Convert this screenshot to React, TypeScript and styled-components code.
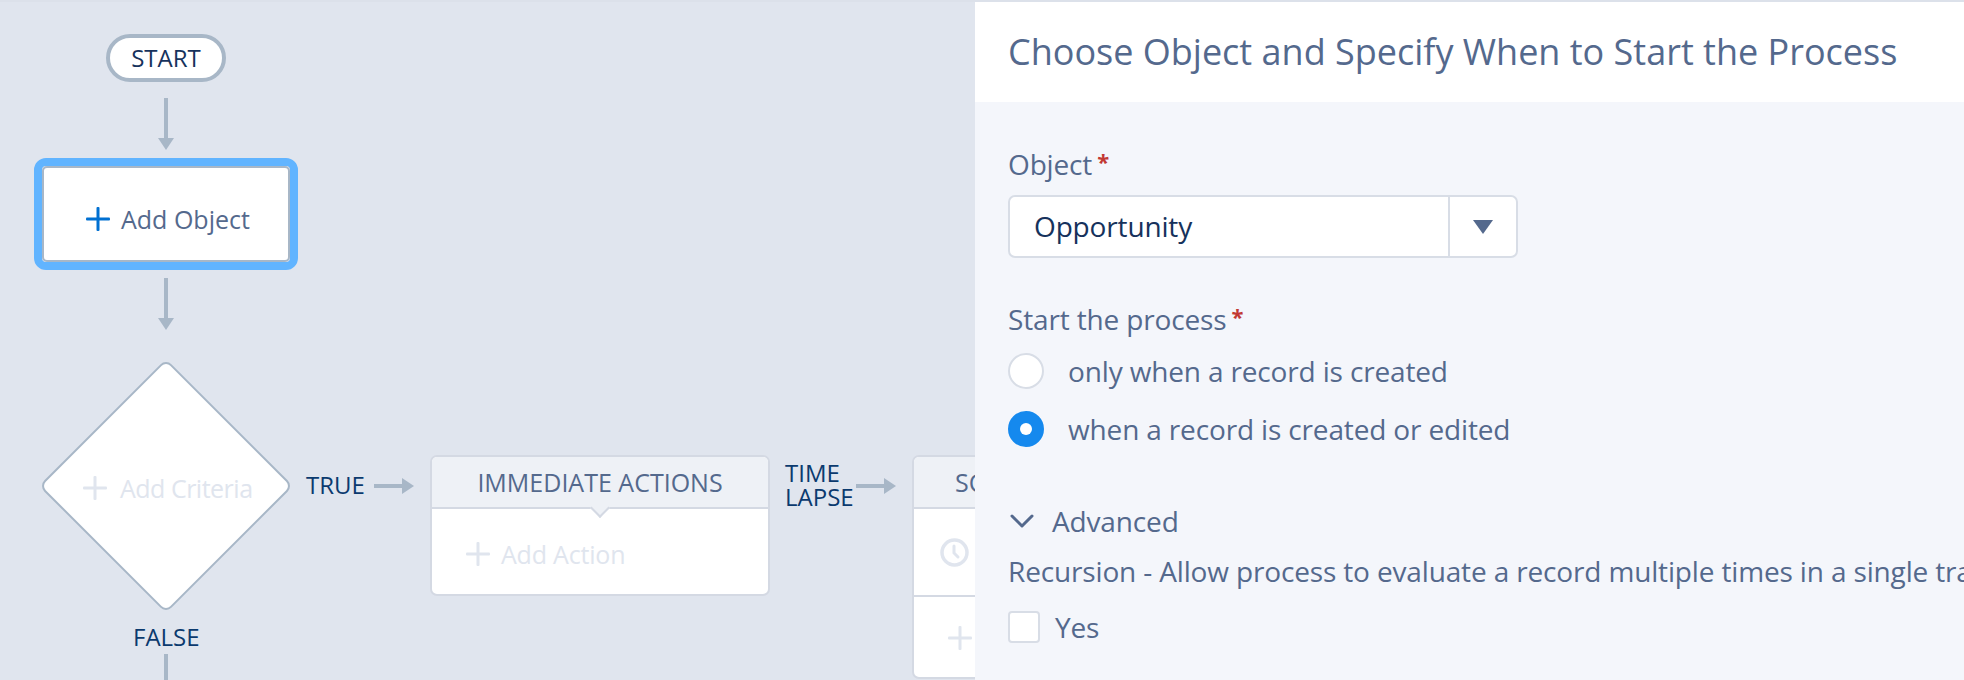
import React from "react";
import styled, { createGlobalStyle } from "styled-components";

const FONT = `"Open Sans", "Liberation Sans", sans-serif`;

const GlobalStyle = createGlobalStyle`
  html, body {
    margin: 0;
    padding: 0;
    background: #e0e5ee;
    font-family: ${FONT};
    overflow: hidden;
  }
`;

const Page = styled.div`
  display: flex;
  width: 1964px;
  height: 680px;
  overflow: hidden;
  border-top: 2px solid #dce1ea;
  box-sizing: border-box;
`;

/* ---- flow canvas: nodes sit at their diagram coordinates ---- */

const Canvas = styled.div`
  position: relative;
  width: 975px;
  height: 680px;
  margin-top: -2px;
  flex: none;
  overflow: hidden;
  background: #e0e5ee;
`;

const StartPill = styled.div`
  position: absolute;
  left: 106px;
  top: 34px;
  width: 120px;
  height: 48px;
  box-sizing: border-box;
  padding-bottom: 2px;
  display: flex;
  align-items: center;
  justify-content: center;
  background: #fff;
  border: 4px solid #a8b7c7;
  border-radius: 24px;
  color: #16325c;
  font-size: 24px;
`;

const Connector = styled.svg<{ $x: number; $y: number }>`
  position: absolute;
  left: ${(p) => p.$x}px;
  top: ${(p) => p.$y}px;
  display: block;
`;

const DownArrow = ({ y }: { y: number }) => (
  <Connector $x={158} $y={y} width="16" height="52" viewBox="0 0 16 52">
    <rect x="6" y="0" width="4" height="42" fill="#a8b7c7" />
    <path d="M0 40h16l-8 12z" fill="#a8b7c7" />
  </Connector>
);

const RightArrow = ({ x, y, w }: { x: number; y: number; w: number }) => (
  <Connector $x={x} $y={y} width={w} height="16" viewBox={`0 0 ${w} 16`}>
    <rect x="0" y="6" width={w - 10} height="4" fill="#a8b7c7" />
    <path d={`M${w - 12} 0v16l12-8z`} fill="#a8b7c7" />
  </Connector>
);

const PlusMark = styled.svg`
  flex: none;
  display: block;
`;

const Plus = ({ size, color, weight }: { size: number; color: string; weight: number }) => (
  <PlusMark width={size} height={size} viewBox={`0 0 ${size} ${size}`}>
    <rect x={(size - weight) / 2} y="0" width={weight} height={size} rx="1" fill={color} />
    <rect x="0" y={(size - weight) / 2} width={size} height={weight} rx="1" fill={color} />
  </PlusMark>
);

const ObjectHalo = styled.div`
  position: absolute;
  left: 34px;
  top: 158px;
  width: 264px;
  height: 112px;
  box-sizing: border-box;
  border: 8px solid #61b4ff;
  border-radius: 12px;
`;

const ObjectBox = styled.div`
  height: 100%;
  box-sizing: border-box;
  padding: 10px 0 0 42px;
  display: flex;
  align-items: center;
  gap: 11px;
  background: #fff;
  border: 2px solid #a8b7c7;
  border-radius: 5px;
  color: #54698d;
  font-size: 25px;
`;

const Diamond = styled.div`
  position: absolute;
  left: 76px;
  top: 396px;
  width: 180px;
  height: 180px;
  box-sizing: border-box;
  transform: rotate(45deg);
  background: #fff;
  border: 2px solid #a8b7c7;
  border-radius: 8px;
`;

const CriteriaLabel = styled.div`
  position: absolute;
  left: 83px;
  top: 471px;
  display: flex;
  align-items: center;
  gap: 13px;
  color: #e0e5ee;
  font-size: 25px;
  letter-spacing: -0.5px;
`;

const PathLabel = styled.div<{ $x: number; $y: number }>`
  position: absolute;
  left: ${(p) => p.$x}px;
  top: ${(p) => p.$y}px;
  color: #0b3a6e;
  font-size: 24px;
  line-height: 24px;
`;

const FalseLine = styled.div`
  position: absolute;
  left: 164px;
  top: 654px;
  width: 4px;
  height: 26px;
  background: #a8b7c7;
`;

const ActionCard = styled.div<{ $x: number; $h: number }>`
  position: absolute;
  left: ${(p) => p.$x}px;
  top: 455px;
  width: 340px;
  height: ${(p) => p.$h}px;
  box-sizing: border-box;
  display: flex;
  flex-direction: column;
  background: #fff;
  border: 2px solid #d4d9e3;
  border-radius: 7px;
`;

const CardHeader = styled.div`
  position: relative;
  height: 52px;
  flex: none;
  box-sizing: border-box;
  display: flex;
  align-items: center;
  justify-content: center;
  background: #eef1f6;
  border-bottom: 2px solid #d4d9e3;
  border-radius: 5px 5px 0 0;
  color: #54698d;
  font-size: 25px;
  white-space: nowrap;
`;

const Notch = styled.span`
  position: absolute;
  left: 50%;
  bottom: -8px;
  width: 14px;
  height: 14px;
  margin-left: -7px;
  box-sizing: border-box;
  transform: rotate(45deg);
  background: #eef1f6;
  border-right: 2px solid #d4d9e3;
  border-bottom: 2px solid #d4d9e3;
`;

const CardRow = styled.div<{ $h: number; $pad: number; $top?: number }>`
  height: ${(p) => p.$h}px;
  flex: none;
  box-sizing: border-box;
  display: flex;
  align-items: center;
  gap: 11px;
  padding-left: ${(p) => p.$pad}px;
  padding-top: ${(p) => p.$top ?? 0}px;
  color: #e0e5ee;
  font-size: 25px;
  letter-spacing: -0.2px;
  & + & {
    border-top: 2px solid #d4d9e3;
  }
`;

/* ---- right hand panel ---- */

const Panel = styled.div`
  flex: 1;
  display: flex;
  flex-direction: column;
  min-width: 0;
  background: #f4f6fb;
  color: #54698d;
`;

const PanelHeader = styled.div`
  height: 100px;
  flex: none;
  box-sizing: border-box;
  padding: 30px 0 0 33px;
  background: #fff;
  font-size: 36px;
  line-height: 40px;
  white-space: nowrap;
`;

const PanelBody = styled.div`
  flex: 1;
  display: flex;
  flex-direction: column;
  padding: 47px 0 0 33px;
  font-size: 28px;
  line-height: 30px;
  letter-spacing: -0.15px;
  white-space: nowrap;
`;

const FieldLabel = styled.div`
  display: flex;
  align-items: flex-start;
  gap: 5px;
`;

const Required = styled.span`
  color: #c23934;
  font-size: 22px;
  font-weight: 700;
  line-height: 24px;
`;

const SelectBox = styled.div`
  width: 510px;
  height: 63px;
  margin: 16px 0 46px;
  box-sizing: border-box;
  display: flex;
  background: #fff;
  border: 2px solid #d8dde6;
  border-radius: 7px;
`;

const SelectValue = styled.div`
  flex: 1;
  display: flex;
  align-items: center;
  padding: 0 0 2px 24px;
  color: #16325c;
`;

const SelectToggle = styled.div`
  width: 68px;
  flex: none;
  box-sizing: border-box;
  display: flex;
  align-items: center;
  justify-content: center;
  border-left: 2px solid #d8dde6;
`;

const Triangle = styled.span`
  width: 0;
  height: 0;
  border-left: 10px solid transparent;
  border-right: 10px solid transparent;
  border-top: 14px solid #54698d;
`;

const RadioList = styled.div`
  display: flex;
  flex-direction: column;
  gap: 22px;
  margin-top: 19px;
`;

const RadioRow = styled.div`
  display: flex;
  align-items: center;
  gap: 24px;
`;

const RadioDot = styled.span<{ $on?: boolean }>`
  width: 36px;
  height: 36px;
  flex: none;
  box-sizing: border-box;
  display: flex;
  align-items: center;
  justify-content: center;
  border-radius: 50%;
  background: ${(p) => (p.$on ? "#1589ee" : "#fff")};
  border: 2px solid ${(p) => (p.$on ? "#1589ee" : "#d8dde6")};
  &::after {
    content: "";
    display: ${(p) => (p.$on ? "block" : "none")};
    width: 12px;
    height: 12px;
    border-radius: 50%;
    background: #fff;
  }
`;

const AdvancedRow = styled.div`
  display: flex;
  align-items: center;
  gap: 18px;
  margin: 59px 0 0 2px;
`;

const RecursionText = styled.div`
  margin-top: 20px;
`;

const CheckRow = styled.div`
  display: flex;
  align-items: center;
  gap: 15px;
  margin-top: 25px;
`;

const CheckBox = styled.span`
  width: 32px;
  height: 32px;
  box-sizing: border-box;
  background: #fff;
  border: 2px solid #d8dde6;
  border-radius: 4px;
`;

const Chevron = () => (
  <svg width="24" height="15" viewBox="0 0 24 15" fill="none">
    <path d="M2 2l10 10L22 2" stroke="#54698d" strokeWidth="3" strokeLinecap="round" strokeLinejoin="round" />
  </svg>
);

const Clock = () => (
  <svg width="29" height="29" viewBox="0 0 29 29" fill="none">
    <circle cx="14.5" cy="14.5" r="12.5" stroke="#e0e5ee" strokeWidth="3.5" />
    <path d="M14 8v7l4 4" stroke="#e0e5ee" strokeWidth="3" strokeLinecap="round" />
  </svg>
);

export default function App() {
  return (
    <>
      <GlobalStyle />
      <Page>
        <Canvas>
          <StartPill>START</StartPill>
          <DownArrow y={98} />
          <ObjectHalo>
            <ObjectBox>
              <Plus size={24} color="#0070d2" weight={3} />
              Add Object
            </ObjectBox>
          </ObjectHalo>
          <DownArrow y={278} />
          <Diamond />
          <CriteriaLabel>
            <Plus size={24} color="#e0e5ee" weight={3} />
            Add Criteria
          </CriteriaLabel>
          <PathLabel $x={306} $y={473}>TRUE</PathLabel>
          <RightArrow x={374} y={478} w={40} />
          <ActionCard $x={430} $h={141}>
            <CardHeader>
              IMMEDIATE ACTIONS
              <Notch />
            </CardHeader>
            <CardRow $h={84} $pad={34} $top={5}>
              <Plus size={24} color="#e0e5ee" weight={3} />
              Add Action
            </CardRow>
          </ActionCard>
          <PathLabel $x={785} $y={461}>TIME<br />LAPSE</PathLabel>
          <RightArrow x={856} y={478} w={40} />
          <ActionCard $x={912} $h={224}>
            <CardHeader>
              SCHEDULED ACTIONS
              <Notch />
            </CardHeader>
            <CardRow $h={86} $pad={26}>
              <Clock />
            </CardRow>
            <CardRow $h={83} $pad={34}>
              <Plus size={24} color="#e0e5ee" weight={3} />
            </CardRow>
          </ActionCard>
          <PathLabel $x={133} $y={625}>FALSE</PathLabel>
          <FalseLine />
        </Canvas>
        <Panel>
          <PanelHeader>Choose Object and Specify When to Start the Process</PanelHeader>
          <PanelBody>
            <FieldLabel>
              Object<Required>*</Required>
            </FieldLabel>
            <SelectBox>
              <SelectValue>Opportunity</SelectValue>
              <SelectToggle>
                <Triangle />
              </SelectToggle>
            </SelectBox>
            <FieldLabel>
              Start the process<Required>*</Required>
            </FieldLabel>
            <RadioList>
              <RadioRow>
                <RadioDot />
                only when a record is created
              </RadioRow>
              <RadioRow>
                <RadioDot $on />
                when a record is created or edited
              </RadioRow>
            </RadioList>
            <AdvancedRow>
              <Chevron />
              Advanced
            </AdvancedRow>
            <RecursionText>Recursion - Allow process to evaluate a record multiple times in a single transaction?</RecursionText>
            <CheckRow>
              <CheckBox />
              Yes
            </CheckRow>
          </PanelBody>
        </Panel>
      </Page>
    </>
  );
}
